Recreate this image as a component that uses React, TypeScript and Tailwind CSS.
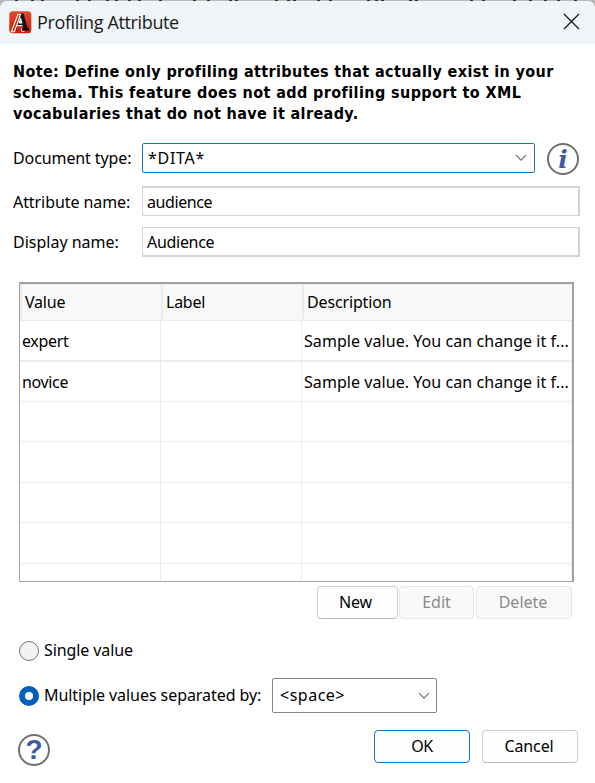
import type { ReactNode } from "react";

function Chevron() {
  return (
    <svg width="12" height="8" viewBox="0 0 12 8" fill="none" stroke="#666" strokeWidth="1.1">
      <path d="M1 1.2 6 6.2 11 1.2" />
    </svg>
  );
}

function Logo() {
  return (
    <svg width="23" height="23" viewBox="0 0 23 23">
      <defs>
        <linearGradient id="red" x1="0" y1="0" x2="0" y2="1">
          <stop offset="0" stopColor="#e04a30" />
          <stop offset="1" stopColor="#cf1b06" />
        </linearGradient>
      </defs>
      <rect x="0.3" y="0.3" width="22" height="22" rx="3.5" fill="url(#red)" />
      <path d="M9.5 2.5h5l4 14.5h1.5v2.8h-6.8V17h1.2l-.5-2H8.6L7 20z" fill="#111" />
      <path d="M9.3 12.6 11.8 6l1.8 6.6z" fill="#fff" />
      <path d="M12.6 17v3.3h3" stroke="#fff" strokeWidth="0.8" fill="none" />
      <path d="M2.4 20.8 9 3.2h2.6L5.4 20.8z" fill="#d8290f" stroke="#fff" strokeWidth="1.1" />
      <path d="M7.4 14.6h6" stroke="#fff" strokeWidth="1.2" />
    </svg>
  );
}

function Radio({ checked }: { checked?: boolean }) {
  return checked ? (
    <span className="flex h-5 w-5 items-center justify-center rounded-full bg-[#005fb8]">
      <span className="h-2 w-2 rounded-full bg-white" />
    </span>
  ) : (
    <span className="h-5 w-5 rounded-full border border-[#757575] bg-[#f2f2f2]" />
  );
}

function Row({ top, children }: { top: string; children: ReactNode }) {
  return <div className={`flex items-center ${top}`}>{children}</div>;
}

const rows = [
  { value: "expert", size: "h-[41px] border-b-2" },
  { value: "novice", size: "h-10 border-b" },
  { value: "", size: "h-10 border-b" },
  { value: "", size: "h-[41px] border-b" },
  { value: "", size: "h-10 border-b" },
  { value: "", size: "h-[41px] border-b" },
  { value: "", size: "h-[17px]" },
];

// Dark slivers of the window behind, visible above the title bar.
const specks = [15, 31, 41, 76, 88, 106, 115, 128, 138, 159, 193, 207, 229, 235, 275, 287, 293, 317, 329, 367, 375, 381, 409, 415, 470, 482, 513, 529, 544, 557, 574];

export default function App() {
  return (
    <div className="h-[783px] w-[595px] overflow-hidden bg-[#b9b9b9] font-['Noto_Sans',sans-serif] text-[16px] leading-5 whitespace-nowrap text-black">
      <svg className="block" width="595" height="1">
        {specks.map((x) => (
          <rect key={x} x={x} y="0" width="3" height="1" fill="#2f2f38" />
        ))}
      </svg>
      <div className="h-[782px] overflow-hidden rounded-t-lg bg-white">
        <header className="flex h-[43px] items-center bg-[#eff4f9] pl-[9px] font-['Open_Sans',sans-serif] text-[#1a1a1a]">
          <Logo />
          <h1 className="ml-[5px] w-[526px] pb-[2px] text-[18px] tracking-[-0.37px]">Profiling Attribute</h1>
          <svg className="mb-[2px]" width="17" height="17" viewBox="0 0 17 17" stroke="#191919" strokeWidth="1.3">
            <path d="M1 1 16 16M16 1 1 16" />
          </svg>
        </header>
        <main>
          <p className="mt-[17px] ml-[13px] font-['DejaVu_Sans_Condensed','DejaVu_Sans',sans-serif] text-[16px] leading-[21px] font-bold">
            <span className="block tracking-[0.37px]">Note: Define only profiling attributes that actually exist in your</span>
            <span className="block tracking-[0.4px]">schema. This feature does not add profiling support to XML</span>
            <span className="block tracking-[0.38px]">vocabularies that do not have it already.</span>
          </p>
          <Row top="mt-[18px] pl-[13px] h-[32px]">
            <label className="w-[129px] tracking-[-0.1px]">Document type:</label>
            <div className="flex h-[30px] w-[393px] items-center justify-between rounded-[2px] border border-[#0f74c8] pr-[7px] pl-[5px]">
              <span className="tracking-[0.7px]">*DITA*</span>
              <Chevron />
            </div>
            <span className="mt-[2px] ml-3 flex h-8 w-8 items-center justify-center rounded-full border-2 border-[#707070] pt-[2px] font-['DejaVu_Serif',serif] text-[25px] font-bold text-[#405aa0] italic">
              i
            </span>
          </Row>
          <Row top="mt-3 pl-[13px]">
            <label className="w-[129px] pt-px tracking-[-0.07px]">Attribute name:</label>
            <div className="flex h-[30px] w-[438px] items-center border border-t-2 border-r-2 border-[#d4d4d4] pl-1 tracking-[-0.4px]">audience</div>
          </Row>
          <Row top="mt-[11px] pl-[13px]">
            <label className="w-[129px]">Display name:</label>
            <div className="flex h-[30px] w-[438px] items-center border border-r-2 border-b-2 border-[#d4d4d4] pl-1 tracking-[-0.3px]">Audience</div>
          </Row>
          <div className="mt-[25px] ml-[19px] h-[300px] w-[555px] overflow-hidden border border-t-2 border-r-2 border-[#a3a3a3]">
            <div className="grid h-[37px] grid-cols-[141px_141px_270px] border-t border-b border-[#ebebeb] bg-[#f8f8f8] pb-px">
              <span className="flex items-center border-l-2 border-[#ebebeb] pb-px pl-[3px] tracking-[-0.2px]">Value</span>
              <span className="flex items-center border-l-2 border-[#ebebeb] pb-px pl-[3px] tracking-[-0.25px]">Label</span>
              <span className="flex items-center border-l-2 border-[#ebebeb] pb-px pl-[3px] tracking-[-0.15px]">Description</span>
            </div>
            {rows.map((r, i) => (
              <div key={i} className={`grid grid-cols-[141px_141px_270px] border-[#ebebeb] ${r.size}`}>
                <span className="flex items-center border-r border-[#ebebeb] pl-[2px] tracking-[-0.35px]">{r.value}</span>
                <span className="border-r border-[#ebebeb]" />
                <span className="flex items-center border-r border-[#ebebeb] pl-[2px] tracking-[0.06px]">
                  {r.value && "Sample value. You can change it f..."}
                </span>
              </div>
            ))}
          </div>
          <div className="mt-1 ml-[317px] flex h-[33px]">
            <button className="w-[81px] rounded-[4px] border border-[#cfcfcf] border-b-[#b9b9b9] bg-[#fdfdfd] pr-1 pb-px tracking-[-0.2px]">New</button>
            <button className="ml-px w-[75px] rounded-[4px] border border-[#e5e5e5] bg-[#f9f9f9] pb-px text-[#8a8a8a]">Edit</button>
            <button className="ml-[2px] w-[96px] rounded-[4px] border border-[#e5e5e5] bg-[#f9f9f9] pr-[2px] pb-px text-[#8a8a8a]">Delete</button>
          </div>
          <Row top="mt-[21px] pl-[19px]">
            <Radio />
            <span className="ml-[5px] pb-px tracking-[-0.1px]">Single value</span>
          </Row>
          <Row top="mt-[17px] pl-[19px]">
            <Radio checked />
            <span className="ml-[5px] w-[228px] pb-px tracking-[-0.06px]">Multiple values separated by:</span>
            <div className="flex h-[35px] w-[165px] items-center justify-between rounded-[2px] border border-[#858585] pr-[6px] pl-[7px]">
              <span className="pb-px tracking-[0.5px]">&lt;space&gt;</span>
              <Chevron />
            </div>
          </Row>
          <div className="mt-[17px] flex h-[37px] pl-[18px]">
            <span className="mt-1 flex h-8 w-8 items-center justify-center rounded-full border-2 border-[#707070] font-['Liberation_Sans',sans-serif] text-[28px] font-bold text-[#405aa0]">
              ?
            </span>
            <button className="ml-[324px] h-[33px] w-[96px] rounded-[4px] border border-[#0f74c8] bg-[#fdfdfd] pb-px tracking-[-0.5px]">OK</button>
            <button className="ml-3 h-[33px] w-[96px] rounded-[4px] border border-[#cfcfcf] border-b-[#b9b9b9] bg-[#fdfdfd] pr-[2px] pb-px tracking-[-0.1px]">Cancel</button>
          </div>
        </main>
      </div>
    </div>
  );
}
